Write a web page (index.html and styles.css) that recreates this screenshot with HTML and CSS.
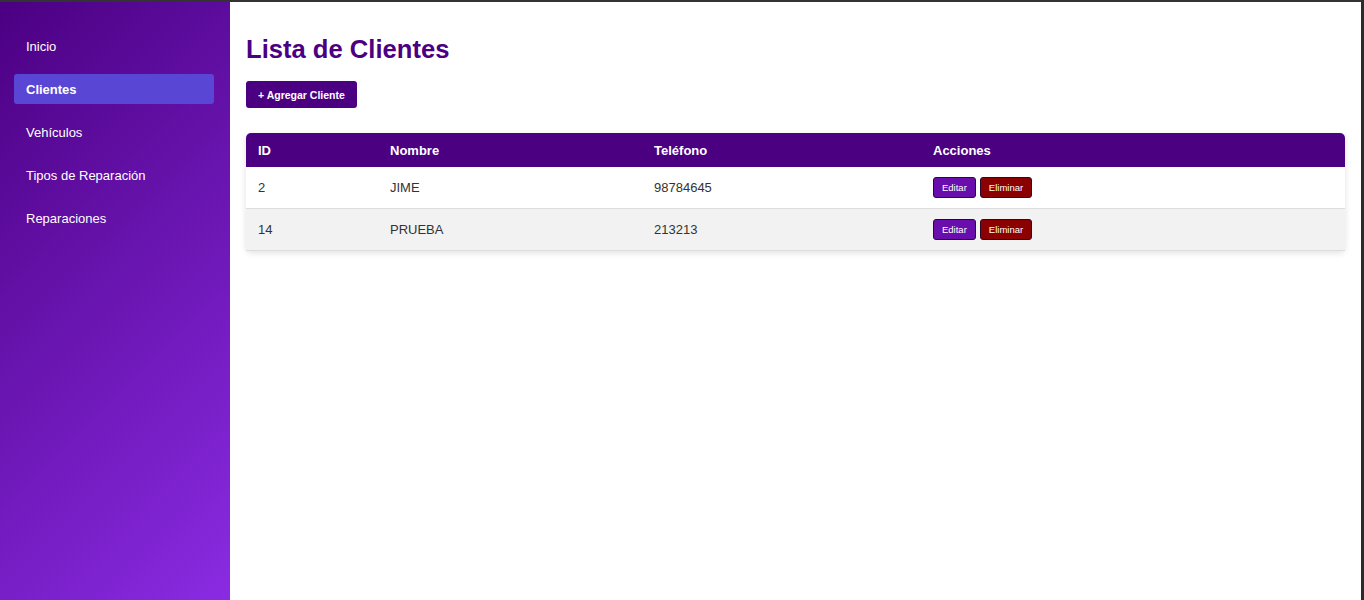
FILE: index.html
```html
<!DOCTYPE html>
<html lang="es">
<head>
<meta charset="utf-8">
<title>Lista de Clientes</title>
<link rel="stylesheet" href="styles.css">
</head>
<body>
<div class="app">
  <aside class="sidebar">
    <nav class="nav">
      <a class="nav-item" href="#">Inicio</a>
      <a class="nav-item active" href="#">Clientes</a>
      <a class="nav-item" href="#">Vehículos</a>
      <a class="nav-item" href="#">Tipos de Reparación</a>
      <a class="nav-item" href="#">Reparaciones</a>
    </nav>
  </aside>
  <main class="content">
    <h1 class="title">Lista de Clientes</h1>
    <button class="btn-add">+ Agregar Cliente</button>
    <table class="table">
      <colgroup>
        <col class="c-id">
        <col class="c-name">
        <col class="c-phone">
        <col>
      </colgroup>
      <thead>
        <tr><th>ID</th><th>Nombre</th><th>Teléfono</th><th>Acciones</th></tr>
      </thead>
      <tbody>
        <tr>
          <td>2</td><td>JIME</td><td>98784645</td>
          <td><div class="actions"><button class="btn-edit">Editar</button><button class="btn-del">Eliminar</button></div></td>
        </tr>
        <tr class="alt">
          <td>14</td><td>PRUEBA</td><td>213213</td>
          <td><div class="actions"><button class="btn-edit">Editar</button><button class="btn-del">Eliminar</button></div></td>
        </tr>
      </tbody>
    </table>
  </main>
</div>
</body>
</html>
```
FILE: styles.css
```css
* { box-sizing: border-box; }
html, body { height: 100%; }
body {
  margin: 0;
  font-family: "Liberation Sans", Arial, sans-serif;
  background: #fff;
  color: #333;
  border-top: 2px solid #333;
  border-right: 3px solid #2b2b2b;
  overflow: hidden;
}
.app {
  display: flex;
  height: 598px;
}
.sidebar {
  width: 230px;
  flex: 0 0 230px;
  background: linear-gradient(135deg, #4b0082 0%, #8a2be2 100%);
  padding: 29px 16px 0 14px;
}
.nav {
  display: flex;
  flex-direction: column;
  gap: 13px;
}
.nav-item {
  display: block;
  color: #fff;
  text-decoration: none;
  font-size: 13px;
  line-height: 15px;
  padding: 8px 12px 7px;
  border-radius: 3px;
}
.nav-item.active {
  background: #5a46d5;
  font-weight: bold;
}
.content {
  flex: 1;
  padding: 16px 16px 0;
}
.title {
  margin: 17px 0 17px;
  font-size: 25.6px;
  font-weight: bold;
  color: #4b0082;
  line-height: 29px;
}
.btn-add {
  display: block;
  background: #4b0082;
  color: #fff;
  border: none;
  border-radius: 3px;
  font-family: "Liberation Sans", Arial, sans-serif;
  font-size: 10.5px;
  font-weight: bold;
  line-height: 11px;
  padding: 9px 12px 7px;
  margin: 0;
}
.table {
  width: 100%;
  margin-top: 25px;
  border-collapse: separate;
  border-spacing: 0;
  table-layout: fixed;
  background: #fff;
  border-radius: 5px;
  box-shadow: 0 2px 6px rgba(0,0,0,0.12);
  font-size: 13px;
}
.c-id { width: 132px; }
.c-name { width: 264px; }
.c-phone { width: 279px; }
.table th {
  background: #4b0082;
  color: #fff;
  font-weight: bold;
  text-align: left;
  height: 34px;
  padding: 0 12px;
  line-height: 15px;
}
.table th:first-child { border-top-left-radius: 5px; }
.table th:last-child { border-top-right-radius: 5px; }
.table td {
  height: 42px;
  padding: 0 12px;
  border-bottom: 1px solid #ddd;
  color: #333;
  line-height: 15px;
  vertical-align: middle;
}
.table tr.alt td { background: #f2f2f2; }
.actions {
  display: flex;
  gap: 4px;
  align-items: center;
}
.btn-edit, .btn-del {
  font-family: "Liberation Sans", Arial, sans-serif;
  font-size: 9.5px;
  line-height: 11px;
  color: #fff;
  padding: 4px 8px;
  border: 1px solid #2a0a2a;
  border-radius: 3px;
  margin: 0;
}
.btn-edit { background: #6a0dad; }
.btn-del { background: #8b0000; }
```
